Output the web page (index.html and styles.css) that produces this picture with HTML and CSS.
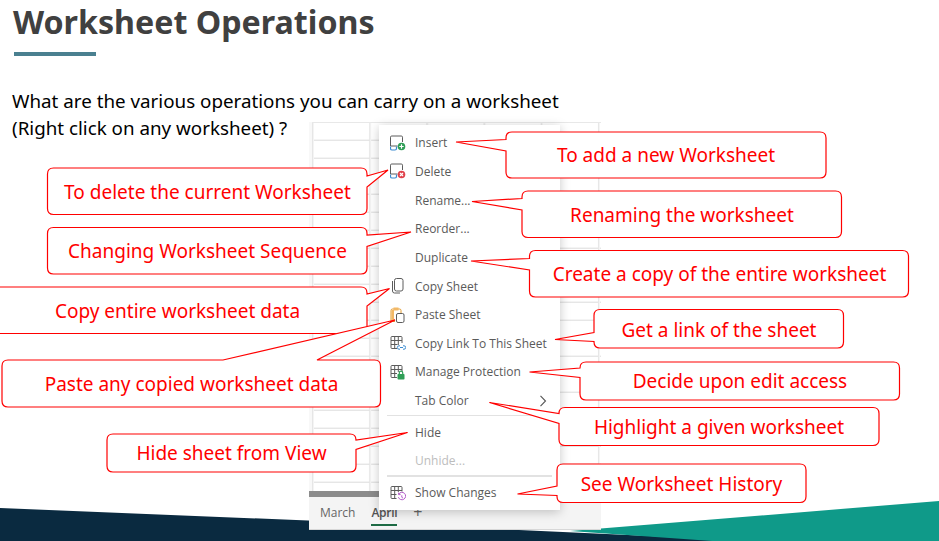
FILE: index.html
```html
<!DOCTYPE html>
<html lang="en">
<head>
<meta charset="utf-8">
<title>Worksheet Operations</title>
<link rel="stylesheet" href="styles.css">
</head>
<body>
<main class="slide">
  <svg class="bands" width="939" height="541" viewBox="0 0 939 541" aria-hidden="true">
    <polygon class="dark" points="0,508 320,521 760,541 0,541"/>
    <polygon class="teal" points="570,531 939,501 939,541 712,541"/>
  </svg>

  <h1 class="title">Worksheet Operations</h1>
  <div class="rule"></div>
  <p class="question">What are the various operations you can carry on a worksheet<br>(Right click on any worksheet) ?</p>

  <section class="sheet">
    <div class="grid"></div>
    <div class="scroll"></div>
    <div class="tabs">
      <span class="tab">March</span>
      <span class="tab active">April</span>
      <span class="tab plus">+</span>
    </div>
  </section>

  <nav class="menu">
    <div class="item">
      <svg class="ico" width="16" height="16" viewBox="0 0 16 16"><path class="ln" d="M.5 11V2.200q0-1.200 1.200-1.200h9.600q1.200 0 1.200 1.200V7"/><path class="ln" d="M.5 11h7"/><path class="bl" d="M.5 11.500v2q0 1.500 1.500 1.500h3q1.500 0 1.500-1.500v-2"/><circle class="gr" cx="11.500" cy="11.500" r="3.800"/><path class="wh" d="M11.500 9.300v4.400M9.300 11.500h4.400"/></svg>
      <span>Insert</span>
    </div>
    <div class="item">
      <svg class="ico" width="16" height="16" viewBox="0 0 16 16"><path class="ln" d="M.5 11V2.200q0-1.200 1.200-1.200h9.600q1.200 0 1.200 1.200V7"/><path class="ln" d="M.5 11h7"/><path class="bl" d="M.5 11.500v2q0 1.500 1.500 1.500h3q1.500 0 1.500-1.500v-2"/><circle class="rd" cx="11.500" cy="11.500" r="3.800"/><path class="wh" d="M10 10l3 3M13 10l-3 3"/></svg>
      <span>Delete</span>
    </div>
    <div class="item"><span class="ico"></span><span>Rename...</span></div>
    <div class="item"><span class="ico"></span><span>Reorder...</span></div>
    <div class="item"><span class="ico"></span><span>Duplicate</span></div>
    <div class="item">
      <svg class="ico" width="16" height="16" viewBox="0 0 16 16"><rect class="ln" x="4.500" y=".5" width="8.500" height="12.500" rx="2"/><path class="ln" d="M2.500 3v10q0 2 2 2h5.500"/></svg>
      <span>Copy Sheet</span>
    </div>
    <div class="item">
      <svg class="ico" width="16" height="16" viewBox="0 0 16 16"><path class="or" d="M5 14.500H2.500q-1.500 0-1.500-1.500V3.500q0-1.500 1.500-1.500h7q1.500 0 1.500 1.500V6"/><path class="orf" d="M3.500 .5h5v3h-5z"/><path class="orf" d="M1.500 3h2.500v11h-2.500z"/><rect class="lnw" x="6.500" y="6.500" width="7.500" height="9" rx="1.500"/></svg>
      <span>Paste Sheet</span>
    </div>
    <div class="item">
      <svg class="ico" width="16" height="16" viewBox="0 0 16 16"><path class="ln" d="M7 13.500H2q-1 0-1-1v-10q0-1 1-1h9q1 0 1 1V8M1 5.500h11M1 9.500h6.500M4.700 1.500v12M8.300 1.500V10"/><path class="blt" d="M10 10.800H9a1.700 1.700 0 0 0 0 3.400h1M13 10.800h1a1.700 1.700 0 0 1 0 3.400h-1M10 12.500h3"/></svg>
      <span>Copy Link To This Sheet</span>
    </div>
    <div class="item">
      <svg class="ico" width="16" height="16" viewBox="0 0 16 16"><path class="ln" d="M7 13.500H2q-1 0-1-1v-10q0-1 1-1h9q1 0 1 1V7M1 5.500h11M1 9.500h6M4.700 1.500v12M8.300 1.500V8"/><rect class="grf" x="7.500" y="10" width="7" height="5.500" rx=".8"/><path class="grl" d="M9.300 10V8.800a1.700 1.700 0 0 1 3.400 0V10"/></svg>
      <span>Manage Protection</span>
    </div>
    <div class="item">
      <span class="ico"></span><span>Tab Color</span>
      <svg class="chev" width="8" height="12" viewBox="0 0 8 12"><path d="M1.500 .8L6.500 6l-5 5.200"/></svg>
    </div>
    <div class="sep"></div>
    <div class="item"><span class="ico"></span><span>Hide</span></div>
    <div class="item off"><span class="ico"></span><span>Unhide...</span></div>
    <div class="sep"></div>
    <div class="item">
      <svg class="ico" width="16" height="16" viewBox="0 0 16 16"><path class="ln" d="M6.500 13.500H2q-1 0-1-1v-10q0-1 1-1h9q1 0 1 1V6.500M1 5.500h11M1 9.500h5.500M4.700 1.500v12M8.300 1.500V7"/><path class="pu" d="M8.700 9.200a3.700 3.700 0 1 1-.3 3M8.600 7.600v2h2M11.800 10.300v2l1.200.8"/></svg>
      <span>Show Changes</span>
    </div>
  </nav>

  <svg class="lines" width="939" height="541" viewBox="0 0 939 541" aria-hidden="true">
    <path d="M512 132H820Q826 132 826 138V172Q826 178 820 178H512Q506 178 506 172V151L456 142L506 139.500V138Q506 132 512 132Z"/>
    <path d="M53.500 168H361Q367 168 367 174V176L388 170L367 187V208.500Q367 214.500 361 214.500H53.500Q47.500 214.500 47.500 208.500V174Q47.500 168 53.500 168Z"/>
    <path d="M528 191H835.500Q841.500 191 841.500 197V231.500Q841.500 237.500 835.500 237.500H528Q522 237.500 522 231.500V210L472 201.500L522 198.500V197Q522 191 528 191Z"/>
    <path d="M53.500 227.500H361Q367 227.500 367 233.500V235L411 232L367 246.500V268Q367 274 361 274H53.500Q47.500 274 47.500 268V233.500Q47.500 227.500 53.500 227.500Z"/>
    <path d="M535.500 250.500H902.500Q908.500 250.500 908.500 256.500V291Q908.500 297 902.500 297H535.500Q529.500 297 529.500 291V270L471 261L529.500 258.500V256.500Q529.500 250.500 535.500 250.500Z"/>
    <path d="M-12 287H361Q367 287 367 293V294L389.500 288.500L367 306V327.500Q367 333.500 361 333.500H-12Z"/>
    <path d="M8 360H223L395 320L317 360H374.500Q380.500 360 380.500 366V401Q380.500 407 374.500 407H8Q2 407 2 401V366Q2 360 8 360Z"/>
    <path d="M113 434H350Q356 434 356 440L407.500 432.500L356 449.500V466Q356 472 350 472H113Q107 472 107 466V440Q107 434 113 434Z"/>
    <path d="M600 309.500H837.500Q843.500 309.500 843.500 315.500V342Q843.500 348 837.500 348H600Q594 348 594 342V341.500L555 339.500L594 332.500V315.500Q594 309.500 600 309.500Z"/>
    <path d="M586 362H893.500Q899.500 362 899.500 368V394Q899.500 400 893.500 400H586Q580 400 580 394V377.500L529.500 372L580 368Q580 362 586 362Z"/>
    <path d="M565 407.500H873Q879 407.500 879 413.500V439.500Q879 445.500 873 445.500H565Q559 445.500 559 439.500V423.500L489.500 402.500L559 413.500Q559 407.500 565 407.500Z"/>
    <path d="M563 464H800Q806 464 806 470V496.500Q806 502.500 800 502.500H563Q557 502.500 557 496.500V495.500L517.500 494L557 486V470Q557 464 563 464Z"/>
  </svg>

  <div class="note n1">To add a new Worksheet</div>
  <div class="note n2">To delete the current Worksheet</div>
  <div class="note n3">Renaming the worksheet</div>
  <div class="note n4">Changing Worksheet Sequence</div>
  <div class="note n5">Create a copy of the entire worksheet</div>
  <div class="note n6">Copy entire worksheet data</div>
  <div class="note n7">Paste any copied worksheet data</div>
  <div class="note n8">Hide sheet from View</div>
  <div class="note n9">Get a link of the sheet</div>
  <div class="note n10">Decide upon edit access</div>
  <div class="note n11">Highlight a given worksheet</div>
  <div class="note n12">See Worksheet History</div>
</main>
</body>
</html>
```
FILE: styles.css
```css
* { box-sizing: border-box; }
html, body { margin: 0; background: #fff; }
body { font-family: "Noto Sans", "Open Sans", sans-serif; }

.slide {
  position: relative;
  width: 939px;
  height: 541px;
  overflow: hidden;
  background: #fff;
  padding: 0 0 0 13px;
}
.bands { position: absolute; left: 0; top: 0; }
.dark { fill: #0a2a40; }
.teal { fill: #0f9a89; }

.title {
  position: relative;
  margin: 0;
  font-size: 32.2px;
  line-height: 44px;
  font-weight: 700;
  color: #404040;
}
.rule {
  position: relative;
  width: 82px;
  height: 4px;
  margin: 8px 0 0 1px;
  background: #4a8090;
}
.question {
  position: relative;
  margin: 32px 0 0 -1px;
  font-size: 18.8px;
  line-height: 27px;
  color: #000;
}

.sheet {
  position: absolute;
  left: 309px;
  top: 122px;
  width: 292px;
  height: 408px;
  display: flex;
  flex-direction: column;
  background: #f8f8f8;
}
.grid {
  flex: 1;
  margin-left: 3px;
  background-color: #fff;
  border-top: 1px solid #e8e8e8;
  background-image:
    linear-gradient(to right, #e6e6e6 1px, #f4f4f4 1px, #f4f4f4 2px, transparent 2px),
    linear-gradient(to bottom, transparent 16px, #f4f4f4 16px, #f4f4f4 17px, #e6e6e6 17px);
  background-size: 57.2px 100%, 100% 18px;
}
.scroll { width: 100px; height: 6px; background: #8c8c8c; }
.tabs {
  height: 33px;
  display: flex;
  align-items: center;
  gap: 16px;
  padding: 0 0 2px 11px;
  background: #f4f4f4;
  border-bottom: 1px solid #d8d8d8;
  font-family: "Open Sans", "Noto Sans", sans-serif;
  font-size: 12px;
  color: #666;
}
.tab { position: relative; }
.tab.active { font-weight: 600; color: #555; letter-spacing: -.3px; }
.tab.active::after {
  content: "";
  position: absolute;
  left: 0;
  right: 0;
  bottom: -5px;
  height: 2px;
  background: #1e6b45;
}
.tab.plus { font-size: 16px; line-height: 16px; }

.menu {
  position: absolute;
  left: 379px;
  top: 125px;
  width: 181px;
  height: 385px;
  padding-top: 3.500px;
  display: flex;
  flex-direction: column;
  background: #fff;
  box-shadow: 0 2px 10px rgba(0, 0, 0, .22);
  font-family: "Open Sans", "Noto Sans", sans-serif;
  font-size: 12px;
  color: #5a5a5a;
}
.item {
  height: 28.65px;
  flex: none;
  display: flex;
  align-items: center;
  padding: 0 13px 0 11px;
}
.item.off { color: #bdbdbd; }
.ico { width: 16px; height: 16px; flex: none; margin-right: 9px; }
.chev { margin-left: auto; }
.chev path { fill: none; stroke: #555; stroke-width: 1.1; }
.sep { height: 1.5px; flex: none; margin: 0 8px 1.5px; background: #e2e2e2; }

.ln { fill: none; stroke: #5c5c5c; stroke-width: 1; }
.lnw { fill: #fff; stroke: #5c5c5c; stroke-width: 1; }
.bl { fill: none; stroke: #3a8ad0; stroke-width: 1.2; }
.blt { fill: none; stroke: #3a8ad0; stroke-width: 1; }
.gr { fill: #2f9e56; }
.rd { fill: #e0434c; }
.wh { fill: none; stroke: #fff; stroke-width: 1.2; }
.or { fill: none; stroke: #e39a2d; stroke-width: 1; }
.orf { fill: #f2b866; }
.grf { fill: #2f9e56; }
.grl { fill: none; stroke: #2f9e56; stroke-width: 1.2; }
.pu { fill: none; stroke: #b35cc9; stroke-width: 1; }

.lines { position: absolute; left: 0; top: 0; }
.lines path { fill: #fff; stroke: #ff0000; stroke-width: 1.2; }

.note {
  position: absolute;
  display: flex;
  align-items: center;
  justify-content: center;
  color: #ff0000;
  font-size: 19px;
  white-space: nowrap;
}
.n1 { left: 506px; top: 132px; width: 320px; height: 46px; }
.n2 { left: 48px; top: 168px; width: 319px; height: 47px; }
.n3 { left: 522px; top: 191px; width: 320px; height: 47px; }
.n4 { left: 48px; top: 228px; width: 319px; height: 46px; }
.n5 { left: 530px; top: 250px; width: 379px; height: 47px; }
.n6 { left: -12px; top: 287px; width: 379px; height: 47px; }
.n7 { left: 2px; top: 360px; width: 379px; height: 47px; }
.n8 { left: 107px; top: 434px; width: 249px; height: 38px; }
.n9 { left: 594px; top: 311px; width: 250px; height: 38px; }
.n10 { left: 580px; top: 362px; width: 320px; height: 38px; }
.n11 { left: 559px; top: 408px; width: 320px; height: 38px; }
.n12 { left: 557px; top: 464px; width: 249px; height: 39px; }
```
